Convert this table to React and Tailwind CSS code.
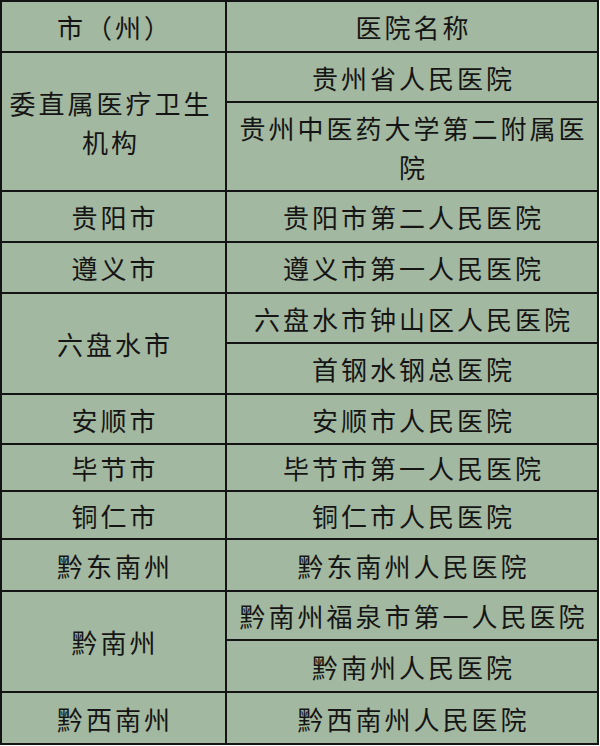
import React from "react";

const cell =
  "bg-[#a3b8a0] flex items-center justify-center text-center pl-[3px] text-[26px] tracking-[3px] leading-[39px] text-[#151515]";

export default function App() {
  return (
    <div
      className="w-[599px] bg-[#141414] p-[2px] grid grid-cols-[223px_370px] gap-[2px] grid-rows-[49px_48px_87px_49px_49px_48px_49px_48px_45px_46px_50px_47px_50px_50px]"
      style={{ fontFamily: '"Noto Sans CJK SC", "Noto Sans", sans-serif' }}
    >
      <div className={cell}>市（州）</div>
      <div className={cell}>医院名称</div>

      <div className={cell + " row-span-2 px-2"}>委直属医疗卫生机构</div>
      <div className={cell}>贵州省人民医院</div>
      <div className={cell}>贵州中医药大学第二附属医院</div>

      <div className={cell}>贵阳市</div>
      <div className={cell}>贵阳市第二人民医院</div>

      <div className={cell}>遵义市</div>
      <div className={cell}>遵义市第一人民医院</div>

      <div className={cell + " row-span-2"}>六盘水市</div>
      <div className={cell}>六盘水市钟山区人民医院</div>
      <div className={cell}>首钢水钢总医院</div>

      <div className={cell}>安顺市</div>
      <div className={cell}>安顺市人民医院</div>

      <div className={cell}>毕节市</div>
      <div className={cell}>毕节市第一人民医院</div>

      <div className={cell}>铜仁市</div>
      <div className={cell}>铜仁市人民医院</div>

      <div className={cell}>黔东南州</div>
      <div className={cell}>黔东南州人民医院</div>

      <div className={cell + " row-span-2"}>黔南州</div>
      <div className={cell}>黔南州福泉市第一人民医院</div>
      <div className={cell}>黔南州人民医院</div>

      <div className={cell}>黔西南州</div>
      <div className={cell}>黔西南州人民医院</div>
    </div>
  );
}
